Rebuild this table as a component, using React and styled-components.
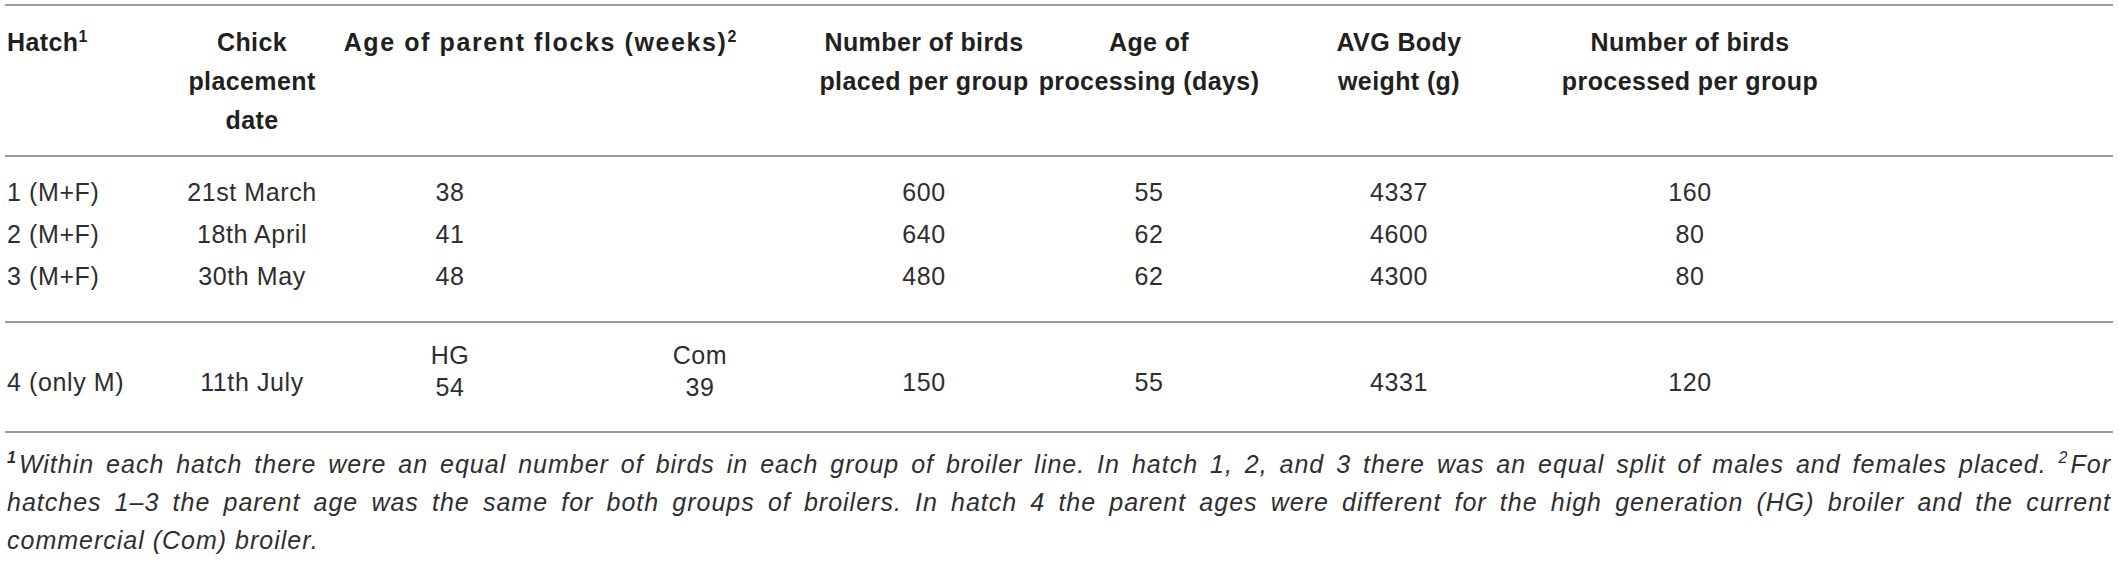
import React from 'react'
import styled, { createGlobalStyle } from 'styled-components'

const GlobalStyle = createGlobalStyle`
   html, body {
      margin: 0;
      padding: 0;
      background: #ffffff;
   }
   body {
      font-family: 'Liberation Sans', Arial, Helvetica, sans-serif;
      color: #231f20;
   }
`

// track widths tuned so each centred column sits where it does in the print
const COLS = '209px 76px 320px 180px 268px 182px 318px 264px 1fr'

const rows = [
   { hatch: '1 (M+F)', date: '21st March', age: '38', placed: '600', days: '55', weight: '4337', processed: '160' },
   { hatch: '2 (M+F)', date: '18th April', age: '41', placed: '640', days: '62', weight: '4600', processed: '80' },
   { hatch: '3 (M+F)', date: '30th May', age: '48', placed: '480', days: '62', weight: '4300', processed: '80' },
]

export default function App() {
   return (
      <>
         <GlobalStyle />
         <Page>
            <Table>
               <HeadRow>
                  <Cell $left>
                     <HeadText>
                        Hatch<Sup>1</Sup>
                     </HeadText>
                  </Cell>
                  <Cell>
                     <HeadText>
                        Chick
                        <br />
                        placement
                        <br />
                        date
                     </HeadText>
                  </Cell>
                  <Cell $span={2}>
                     <HeadText $wide>
                        Age of parent flocks (weeks)<Sup>2</Sup>
                     </HeadText>
                  </Cell>
                  <Cell>
                     <HeadText>
                        Number of birds
                        <br />
                        placed per group
                     </HeadText>
                  </Cell>
                  <Cell>
                     <HeadText>
                        Age of
                        <br />
                        processing (days)
                     </HeadText>
                  </Cell>
                  <Cell>
                     <HeadText>
                        AVG Body
                        <br />
                        weight (g)
                     </HeadText>
                  </Cell>
                  <Cell>
                     <HeadText>
                        Number of birds
                        <br />
                        processed per group
                     </HeadText>
                  </Cell>
               </HeadRow>

               <BodyGroup $top={14} $bottom={24}>
                  {rows.map((r) => (
                     <Row key={r.hatch}>
                        <Cell $left>
                           <DataText>{r.hatch}</DataText>
                        </Cell>
                        <Cell>
                           <DataText>{r.date}</DataText>
                        </Cell>
                        <Cell>
                           <DataText>{r.age}</DataText>
                        </Cell>
                        <Cell />
                        <Cell>
                           <DataText>{r.placed}</DataText>
                        </Cell>
                        <Cell>
                           <DataText>{r.days}</DataText>
                        </Cell>
                        <Cell>
                           <DataText>{r.weight}</DataText>
                        </Cell>
                        <Cell>
                           <DataText>{r.processed}</DataText>
                        </Cell>
                     </Row>
                  ))}
               </BodyGroup>

               <BodyGroup $top={16} $bottom={28}>
                  <Row $end>
                     <Cell $left>
                        <DataText>4 (only M)</DataText>
                     </Cell>
                     <Cell>
                        <DataText>11th July</DataText>
                     </Cell>
                     <Cell>
                        <SubText>HG</SubText>
                        <SubText>54</SubText>
                     </Cell>
                     <Cell>
                        <SubText>Com</SubText>
                        <SubText>39</SubText>
                     </Cell>
                     <Cell>
                        <DataText>150</DataText>
                     </Cell>
                     <Cell>
                        <DataText>55</DataText>
                     </Cell>
                     <Cell>
                        <DataText>4331</DataText>
                     </Cell>
                     <Cell>
                        <DataText>120</DataText>
                     </Cell>
                  </Row>
               </BodyGroup>
            </Table>

            <Footnote>
               <FootLine $justify>
                  <FootSup $bold>1</FootSup>Within each hatch there were an equal number of birds in each
                  group of broiler line. In hatch 1, 2, and 3 there was an equal split of males and females
                  placed. <FootSup>2</FootSup>For
               </FootLine>
               <FootLine $justify>
                  hatches 1–3 the parent age was the same for both groups of broilers. In hatch 4 the parent
                  ages were different for the high generation (HG) broiler and the current
               </FootLine>
               <FootLine>commercial (Com) broiler.</FootLine>
            </Footnote>
         </Page>
      </>
   )
}

const Page = styled.div`
   width: 2108px;
   padding: 4px 6px 0 5px;
`
const Table = styled.div`
   border-top: 2px solid #9a9a9a;
`
const HeadRow = styled.div`
   display: grid;
   grid-template-columns: ${COLS};
   padding: 17px 0 15px;
   border-bottom: 2px solid #9a9a9a;
`
const BodyGroup = styled.div`
   padding: ${(p) => p.$top}px 0 ${(p) => p.$bottom}px;
   border-bottom: 2px solid #9a9a9a;
`
const Row = styled.div`
   display: grid;
   grid-template-columns: ${COLS};
   align-items: ${(p) => (p.$end ? 'end' : 'center')};
`
const Cell = styled.div`
   display: flex;
   flex-direction: column;
   align-items: ${(p) => (p.$left ? 'flex-start' : 'center')};
   padding-left: ${(p) => (p.$left ? '2px' : '0')};
   grid-column: ${(p) => (p.$span ? `span ${p.$span}` : 'auto')};
   white-space: nowrap;
`
const HeadText = styled.div`
   font-size: 25px;
   font-weight: 700;
   line-height: 39px;
   letter-spacing: ${(p) => (p.$wide ? '1.6px' : '0.4px')};
   text-align: center;
   color: #231f20;
`
const DataText = styled.div`
   font-size: 25px;
   line-height: 42px;
   letter-spacing: 0.6px;
   color: #2e2e2e;
`
const SubText = styled.div`
   font-size: 25px;
   line-height: 32px;
   letter-spacing: 0.6px;
   color: #2e2e2e;
`
const Sup = styled.sup`
   font-size: 16px;
   line-height: 0;
   vertical-align: 0.55em;
   letter-spacing: 0;
`
const Footnote = styled.div`
   margin-top: 12px;
   padding: 0 2px;
`
const FootLine = styled.div`
   font-size: 25px;
   font-style: italic;
   line-height: 38px;
   letter-spacing: 1px;
   color: #2e2e2e;
   text-align: ${(p) => (p.$justify ? 'justify' : 'left')};
   text-align-last: ${(p) => (p.$justify ? 'justify' : 'left')};
   white-space: nowrap;
`
const FootSup = styled.sup`
   font-size: 16px;
   font-weight: ${(p) => (p.$bold ? 700 : 400)};
   line-height: 0;
   vertical-align: 0.6em;
   margin-right: 2px;
`
